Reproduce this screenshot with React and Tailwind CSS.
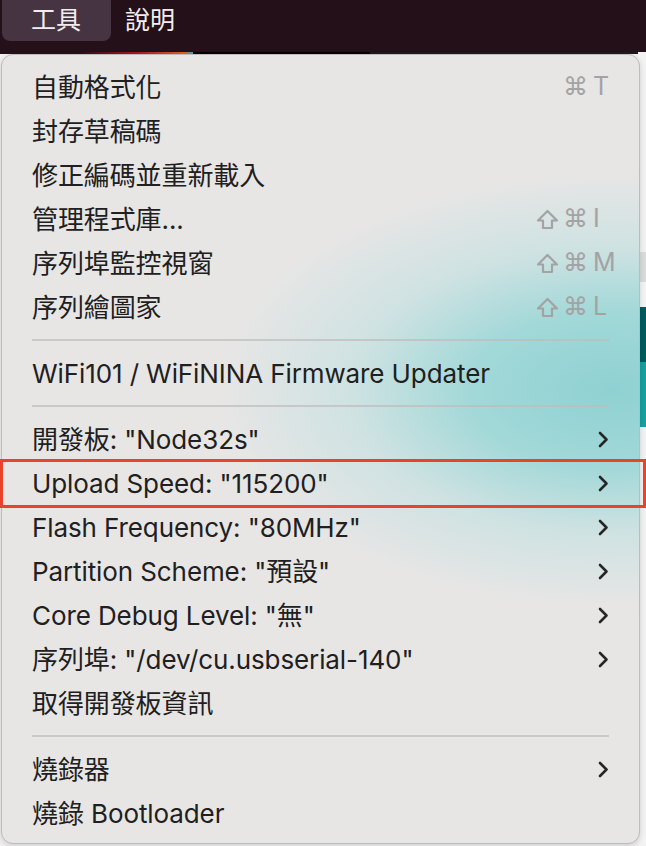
import React from "react";

const font = { fontFamily: '"Inter", "Noto Sans CJK TC", sans-serif' };

const Chevron = () => (
  <svg width="12" height="17" viewBox="0 0 12 17" className="text-[#262626]">
    <polyline points="3,2 9.5,8.5 3,15" fill="none" stroke="currentColor" strokeWidth="2.6" strokeLinecap="round" strokeLinejoin="round" />
  </svg>
);

const Shift = () => (
  <svg width="23" height="21" viewBox="0 0 23 21" className="text-[#a3a3a3]">
    <path d="M11.5 2 L21 11.5 L16 11.5 L16 19 L7 19 L7 11.5 L2 11.5 Z" fill="none" stroke="currentColor" strokeWidth="2.2" strokeLinejoin="round" />
  </svg>
);

const Shortcut = ({ shift, k }) => (
  <div className="flex items-center text-[25px] text-[#a3a3a3]">
    {shift && <Shift />}
    <span className="ml-[4px] w-[22px] text-center">⌘</span>
    <span className="ml-[8px] w-[16px]">{k}</span>
  </div>
);

const Row = ({ label, shortcut, sub }) => (
  <div className="flex h-[44px] items-center justify-between pl-[30px] pr-[30px]">
    <span className="text-[26px] tracking-[-0.1px] text-[#202020]">{label}</span>
    {shortcut}
    {sub && <Chevron />}
  </div>
);

const Sep = () => (
  <div className="flex h-[22px] items-center px-[30px]">
    <div className="h-[2px] w-full bg-[#bdbcbb]/70" />
  </div>
);

export default function App() {
  return (
    <div className="relative h-[846px] w-[646px] overflow-hidden bg-[#f1f1f1]" style={font}>
      {/* app window behind the menu */}
      <div className="absolute right-0 top-[52px] flex h-[794px] w-[8px] flex-col">
        <div className="h-[200px] bg-[#f3f3f3]" />
        <div className="h-[30px] bg-[#dcdcdc]" />
        <div className="h-[25px] bg-[#f5f5f5]" />
        <div className="h-[55px] bg-[#005c5e]" />
        <div className="h-[65px] bg-[#17a1a1]" />
        <div className="flex-1 bg-[#f3f3f3]" />
      </div>

      {/* menu bar */}
      <div className="flex h-[52px] items-start bg-[#241019] px-[2px]">
        <div className="flex h-[41px] w-[109px] items-center rounded-b-[8px] bg-[#463442] pl-[29px] text-[25px] text-[#f2eef0]">
          工具
        </div>
        <div className="flex h-[41px] items-center pl-[14px] text-[25px] text-[#f2eef0]">說明</div>
      </div>
      <div className="flex h-[2px]">
        <div className="w-[193px] bg-[linear-gradient(90deg,#241019_40%,#b01020_70%,#e06020_95%,#3aa0c0)]" />
        <div className="w-[177px] bg-black" />
        <div className="flex-1 bg-[#1c1a1a]" />
      </div>

      {/* dropdown */}
      <div className="relative ml-[1px] w-[639px] rounded-[12px] border border-[#bdbcbb] bg-[#e8e6e5] bg-[radial-gradient(400px_220px_at_610px_335px,#8fd1d2_0%,#a2d8d8_35%,#cfe2e2_65%,rgba(232,230,229,0)_100%)] pb-[8px] pt-[10px] shadow-[0_2px_6px_rgba(0,0,0,0.15)]">
        <Row label="自動格式化" shortcut={<Shortcut k="T" />} />
        <Row label="封存草稿碼" />
        <Row label="修正編碼並重新載入" />
        <Row label="管理程式庫..." shortcut={<Shortcut shift k="I" />} />
        <Row label="序列埠監控視窗" shortcut={<Shortcut shift k="M" />} />
        <Row label="序列繪圖家" shortcut={<Shortcut shift k="L" />} />
        <Sep />
        <Row label="WiFi101 / WiFiNINA Firmware Updater" />
        <Sep />
        <Row label={'開發板: "Node32s"'} sub />
        <Row label={'Upload Speed: "115200"'} sub />
        <Row label={'Flash Frequency: "80MHz"'} sub />
        <Row label={'Partition Scheme: "預設"'} sub />
        <Row label={'Core Debug Level: "無"'} sub />
        <Row label={'序列埠: "/dev/cu.usbserial-140"'} sub />
        <Row label="取得開發板資訊" />
        <Sep />
        <Row label="燒錄器" sub />
        <Row label="燒錄 Bootloader" />
      </div>

      {/* highlight annotation */}
      <div className="absolute left-0 top-[459px] h-[49px] w-[646px] border-[3px] border-[#e8442a]" />
    </div>
  );
}
